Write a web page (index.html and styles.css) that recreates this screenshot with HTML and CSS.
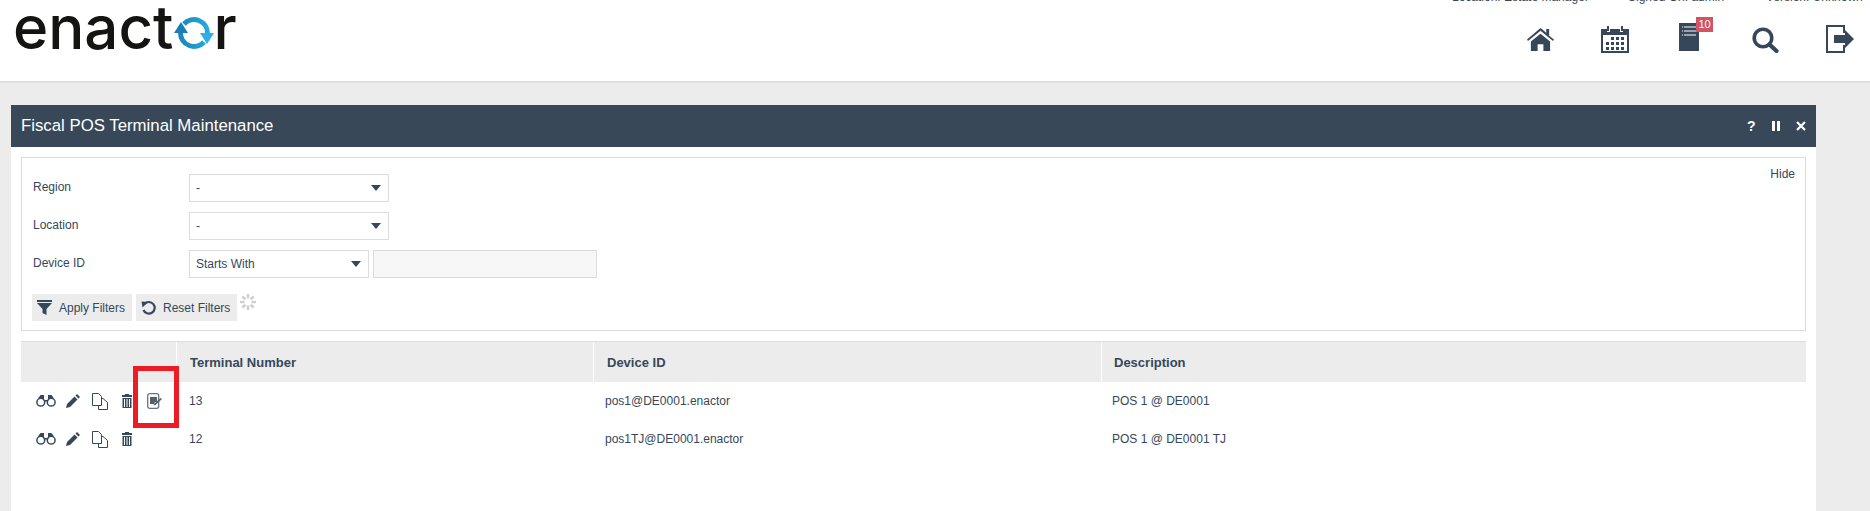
FILE: index.html
```html
<!DOCTYPE html>
<html lang="en">
<head>
<meta charset="utf-8">
<title>Fiscal POS Terminal Maintenance</title>
<link rel="stylesheet" href="styles.css">
</head>
<body>
<header class="topbar">
  <div class="logo">
    <span class="logo-text">enact</span><svg class="logo-o" viewBox="0 0 40 32"><defs><linearGradient id="ring" gradientUnits="userSpaceOnUse" x1="0" y1="0" x2="40" y2="0"><stop offset="0" stop-color="#1a7db5"/><stop offset="1" stop-color="#2bb0e6"/></linearGradient></defs><path d="M10 7A13.500 13.500 0 0 1 33.500 16" fill="none" stroke="url(#ring)" stroke-width="5"/><path d="M6.500 16A13.500 13.500 0 0 0 30 25" fill="none" stroke="url(#ring)" stroke-width="5"/><path d="M0 16H14L7 5Z" fill="#1a7db5"/><path d="M26 16H40L33 27Z" fill="#2bb0e6"/></svg><span class="logo-text">r</span>
  </div>
  <div class="top-right">
    <div class="status">
      <span class="status-loc">Location: Estate Manager</span>
      <span class="status-user">Signed On: admin</span>
      <span class="status-ver">Version: Unknown</span>
    </div>
    <nav class="nav">
      <svg class="nav-home" viewBox="0 0 28 26"><path d="M0 13 14 1l6 5V2h3v7l5 4-1 1.500L14 4 1 14.500Z" fill="#36475a"/><path d="M4 15 14 7l10 8v10h-7v-7h-6v7H4Z" fill="#36475a"/></svg>
      <svg class="nav-cal" viewBox="0 0 28 28"><path d="M0 4h6v3h3V4h10v3h3V4h6v24H0Z" fill="#36475a"/><rect x="2" y="10" width="24" height="16" fill="#fff"/><path d="M6 1h2v5H6zM20 1h2v5h-2z" fill="#36475a"/><path d="M10 12h3v3h-3zM15 12h3v3h-3zM20 12h3v3h-3zM5 17h3v3H5zM10 17h3v3h-3zM15 17h3v3h-3zM20 17h3v3h-3zM5 22h3v3H5zM10 22h3v3h-3zM15 22h3v3h-3zM20 22h3v3h-3z" fill="#36475a"/></svg>
      <div class="nav-doc">
        <svg class="nav-doc-icon" viewBox="0 0 20 28"><rect width="20" height="28" fill="#36475a"/><path d="M3 4h14M3 8h14M3 12h14" stroke="#fff" stroke-width="1.200" stroke-dasharray="1 1 12"/></svg>
        <span class="badge">10</span>
      </div>
      <svg class="nav-search" viewBox="0 0 27 26"><circle cx="11" cy="11" r="8.800" fill="none" stroke="#36475a" stroke-width="3.600"/><path d="M17.500 17.500l7 6.500" stroke="#36475a" stroke-width="4.200" stroke-linecap="round"/></svg>
      <svg class="nav-exit" viewBox="0 0 28 28"><path d="M18 8V1H1v26h17v-7" fill="none" stroke="#36475a" stroke-width="2"/><path d="M8 10h11V5l9 9-9 9v-5H8Z" fill="#36475a"/></svg>
    </nav>
  </div>
</header>
<main class="page">
  <section class="panel">
    <div class="panel-head">
      <h1 class="panel-title">Fiscal POS Terminal Maintenance</h1>
      <div class="panel-tools">
        <span class="tool-q">?</span>
        <svg class="tool-pause" viewBox="0 0 8 10"><path d="M0 0h3v10H0zM5 0h3v10H5z" fill="#fff"/></svg>
        <svg class="tool-x" viewBox="0 0 10 10"><path d="M1 1l8 8M9 1l-8 8" stroke="#fff" stroke-width="2.200"/></svg>
      </div>
    </div>
    <div class="panel-body">
      <form class="filters">
        <a class="hide-link">Hide</a>
        <div class="f-row"><label class="f-label">Region</label><div class="sel sel-wide"><span>-</span><i class="caret"></i></div></div>
        <div class="f-row"><label class="f-label">Location</label><div class="sel sel-wide"><span>-</span><i class="caret"></i></div></div>
        <div class="f-row"><label class="f-label">Device ID</label><div class="sel sel-mid"><span>Starts With</span><i class="caret"></i></div><div class="txt"></div></div>
        <div class="f-buttons">
          <div class="btn"><svg class="btn-ico" viewBox="0 0 15 15"><path d="M0 0h15v2H0zM0 3h15L9.500 9v6l-4-2V9Z" fill="#36475a"/></svg>Apply Filters</div>
          <div class="btn btn-reset"><svg class="btn-ico" viewBox="0 0 15 15"><path d="M3.500 4A5.800 5.800 0 1 1 2.500 10" fill="none" stroke="#36475a" stroke-width="2.200"/><path d="M.5 1.500l6.500.5-5.500 5.500Z" fill="#36475a"/></svg>Reset Filters</div>
          <svg class="spinner" viewBox="0 0 16 16"><g stroke="#cfcfcf" stroke-width="2.600"><path d="M8 0v4.500M8 11.500V16M0 8h4.500M11.500 8H16M2.300 2.300l3 3M10.700 10.700l3 3M2.300 13.700l3-3M10.700 5.300l3-3"/></g></svg>
        </div>
      </form>
      <div class="grid">
        <div class="g-head">
          <div class="c-act"></div>
          <div class="c-num">Terminal Number</div>
          <div class="c-dev">Device ID</div>
          <div class="c-desc">Description</div>
        </div>
        <div class="g-row">
          <div class="c-act">
            <svg class="i-bino" viewBox="0 0 20 12"><circle cx="4.800" cy="7.200" r="3.900" fill="none" stroke="#36475a" stroke-width="1.500"/><circle cx="15.200" cy="7.200" r="3.900" fill="none" stroke="#36475a" stroke-width="1.500"/><path d="M2 3.500 4.500 0H8v5h4V0h3.500L18 3.500 15 3h-1.500L12 6.500H8L6.500 3H5Z" fill="#36475a"/></svg>
            <svg class="i-pen" viewBox="0 0 14 14"><path d="M0 14l1-4 7.500-7.500 3 3L4 13ZM9.500 1.500 11 0l3 3-1.500 1.500Z" fill="#36475a"/></svg>
            <svg class="i-copy" viewBox="0 0 16 17"><path d="M.5.500h6l3 3v9h-9ZM9.500 5.500h1.500l4.500 4v7h-9v-4" fill="none" stroke="#36475a"/></svg>
            <svg class="i-bin" viewBox="0 0 10 14"><path d="M3 0h4v1h3v2H0V1h3ZM.5 4h9v10h-9Z" fill="#36475a"/><path d="M2.500 5v8M5 5v8M7.500 5v8" stroke="#fff"/></svg>
            <svg class="i-note" viewBox="0 0 15 16"><rect x=".7" y=".7" width="11" height="14.600" rx="2" fill="none" stroke="#6a7480" stroke-width="1.300"/><path d="M3 4h7v5H8l-1 2H3Z" fill="#55606c"/><path d="M7 11l6.500-6 1.500 1-6.500 6-2 .5Z" fill="#55606c"/></svg>
          </div>
          <div class="c-num">13</div>
          <div class="c-dev">pos1@DE0001.enactor</div>
          <div class="c-desc">POS 1 @ DE0001</div>
        </div>
        <div class="g-row">
          <div class="c-act">
            <svg class="i-bino" viewBox="0 0 20 12"><circle cx="4.800" cy="7.200" r="3.900" fill="none" stroke="#36475a" stroke-width="1.500"/><circle cx="15.200" cy="7.200" r="3.900" fill="none" stroke="#36475a" stroke-width="1.500"/><path d="M2 3.500 4.500 0H8v5h4V0h3.500L18 3.500 15 3h-1.500L12 6.500H8L6.500 3H5Z" fill="#36475a"/></svg>
            <svg class="i-pen" viewBox="0 0 14 14"><path d="M0 14l1-4 7.500-7.500 3 3L4 13ZM9.500 1.500 11 0l3 3-1.500 1.500Z" fill="#36475a"/></svg>
            <svg class="i-copy" viewBox="0 0 16 17"><path d="M.5.500h6l3 3v9h-9ZM9.500 5.500h1.500l4.500 4v7h-9v-4" fill="none" stroke="#36475a"/></svg>
            <svg class="i-bin" viewBox="0 0 10 14"><path d="M3 0h4v1h3v2H0V1h3ZM.5 4h9v10h-9Z" fill="#36475a"/><path d="M2.500 5v8M5 5v8M7.500 5v8" stroke="#fff"/></svg>
          </div>
          <div class="c-num">12</div>
          <div class="c-dev">pos1TJ@DE0001.enactor</div>
          <div class="c-desc">POS 1 @ DE0001 TJ</div>
        </div>
        <div class="callout"></div>
      </div>
    </div>
  </section>
</main>
</body>
</html>
```
FILE: styles.css
```css
* { box-sizing: border-box; }
html, body { margin: 0; height: 511px; overflow: hidden; }
body { font-family: "Liberation Sans", Arial, sans-serif; font-size: 12px; color: #36475a; background: #ececec; }
.topbar { height: 83px; background: #fff; border-bottom: 2px solid #dedede; display: flex; justify-content: space-between; }
.logo { display: flex; align-items: flex-start; padding-left: 13px; height: 60px; }
.logo-text { font-family: "Inter", "Noto Sans", sans-serif; font-size: 60px; font-weight: 500; line-height: 55px; color: #141412; }
.logo-o { width: 40px; height: 32px; margin-top: 17px; margin-left: 1px; margin-right: -1px; }
.top-right { display: flex; flex-direction: column; align-items: flex-end; }
.status { display: flex; height: 14px; margin-top: -10px; font-size: 12px; line-height: 14px; }
.status-loc { width: 176px; }
.status-user { width: 138px; }
.status-ver { width: 104px; }
.nav { display: flex; align-items: flex-start; margin-top: 13px; padding-right: 16px; }
.nav-home { width: 27px; height: 25px; margin-top: 10px; }
.nav-cal { width: 28px; height: 28px; margin: 8px 0 0 47px; }
.nav-doc { position: relative; width: 20px; height: 28px; margin: 6px 0 0 50px; }
.nav-doc-icon { width: 20px; height: 28px; display: block; }
.badge { position: absolute; left: 17px; top: -6px; width: 17px; height: 15px; background: #cf5465; color: #fff; font-size: 11px; line-height: 15px; text-align: center; }
.nav-search { width: 27px; height: 26px; margin: 10px 0 0 53px; }
.nav-exit { width: 28px; height: 28px; margin: 8px 0 0 47px; }
.page { padding: 22px 0 0 11px; }
.panel { width: 1805px; background: #fff; height: 406px; }
.panel-head { height: 42px; background: #384859; display: flex; align-items: center; justify-content: space-between; padding: 0 10px; }
.panel-title { margin: 0; font-size: 16.800px; font-weight: 400; color: #fff; }
.panel-tools { display: flex; align-items: center; }
.tool-q { color: #fff; font-weight: 700; font-size: 14px; width: 9px; }
.tool-pause { width: 8px; height: 10px; margin-left: 16px; }
.tool-x { width: 10px; height: 10px; margin-left: 16px; }
.panel-body { padding: 10px 10px 0; }
.filters { position: relative; height: 174px; border: 1px solid #dcdcdc; padding: 16px 11px 0; }
.hide-link { position: absolute; right: 10px; top: 9px; line-height: 14px; }
.f-row { display: flex; align-items: flex-start; height: 28px; margin-bottom: 10px; line-height: 28px; }
.f-label { width: 156px; line-height: 26px; }
.sel { height: 28px; border: 1px solid #dcdcdc; padding: 0 6px; display: flex; align-items: center; justify-content: space-between; background: #fff; }
.sel-wide { width: 200px; }
.sel-mid { width: 180px; }
.caret { width: 0; height: 0; border-left: 5px solid transparent; border-right: 5px solid transparent; border-top: 6px solid #36475a; margin-right: 1px; }
.txt { width: 224px; height: 28px; margin-left: 4px; background: #f7f7f7; border: 1px solid #dcdcdc; }
.f-buttons { display: flex; align-items: flex-start; margin-top: 16px; margin-left: -1px; }
.btn { height: 27px; width: 100px; background: #ececec; display: flex; align-items: center; padding-left: 5px; margin-right: 4px; }
.btn-reset { width: 101px; margin-right: 3px; }
.btn-ico { width: 15px; height: 15px; margin-right: 7px; }
.spinner { width: 16px; height: 16px; }
.grid { position: relative; margin-top: 10px; }
.g-head { display: flex; height: 41px; background: #ececec; border-top: 1px solid #dcdcdc; align-items: center; font-weight: 700; font-size: 13px; }
.g-row { display: flex; height: 38px; align-items: center; }
.c-act { width: 156px; padding-left: 15px; display: flex; align-items: center; height: 100%; }
.c-num { width: 417px; padding-left: 13px; height: 100%; display: flex; align-items: center; }
.c-dev { width: 508px; padding-left: 13px; height: 100%; display: flex; align-items: center; }
.c-desc { flex: 1; padding-left: 12px; height: 100%; display: flex; align-items: center; }
.g-head .c-act, .g-head .c-num, .g-head .c-dev { border-right: 1px solid #fff; }
.g-row .c-num { padding-left: 12px; }
.g-row .c-dev { padding-left: 11px; }
.g-row .c-desc { padding-left: 10px; }
.i-bino { width: 20px; height: 12px; }
.i-pen { width: 14px; height: 14px; margin-left: 10px; }
.i-copy { width: 16px; height: 17px; margin-left: 12px; }
.i-bin { width: 10px; height: 14px; margin-left: 14px; }
.i-note { width: 15px; height: 16px; margin-left: 15px; }
.callout { position: absolute; left: 112px; top: 25px; width: 46px; height: 62px; border: 5px solid #ed1c24; }
```
